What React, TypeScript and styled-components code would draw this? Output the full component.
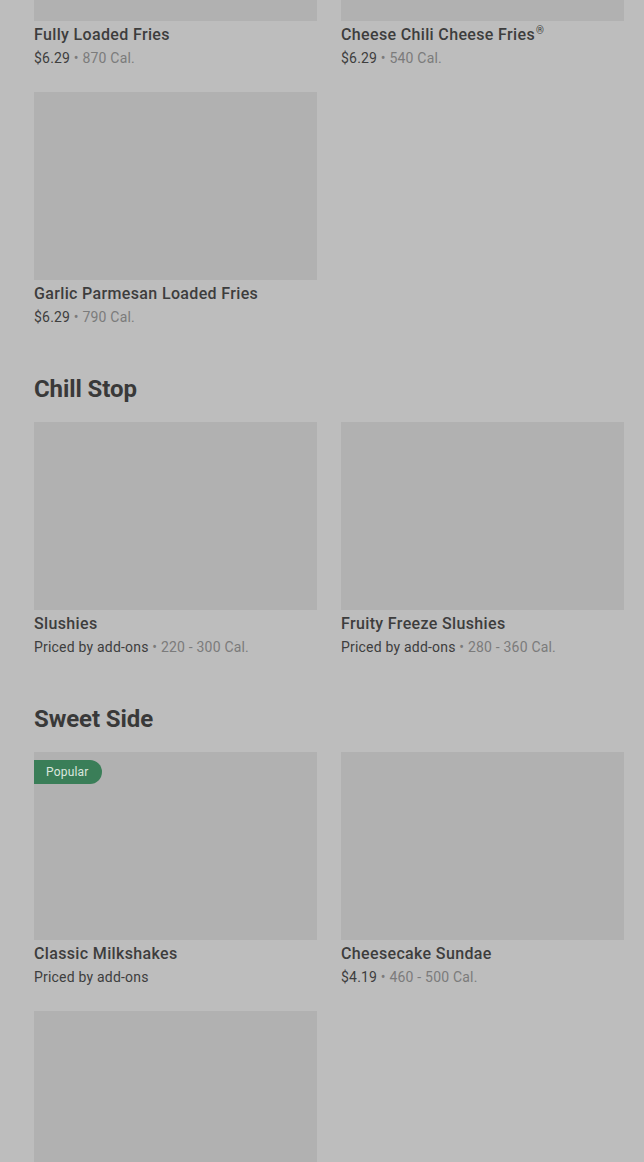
import styled, { createGlobalStyle } from "styled-components";

interface Item {
  name?: string;
  mark?: string;
  price?: string;
  cal?: string;
  popular?: boolean;
}

interface Section {
  title?: string;
  items: Item[];
}

const sections: Section[] = [
  {
    items: [
      { name: "Fully Loaded Fries", price: "$6.29", cal: "870 Cal." },
      { name: "Cheese Chili Cheese Fries", mark: "®", price: "$6.29", cal: "540 Cal." },
      { name: "Garlic Parmesan Loaded Fries", price: "$6.29", cal: "790 Cal." },
    ],
  },
  {
    title: "Chill Stop",
    items: [
      { name: "Slushies", price: "Priced by add-ons", cal: "220 - 300 Cal." },
      { name: "Fruity Freeze Slushies", price: "Priced by add-ons", cal: "280 - 360 Cal." },
    ],
  },
  {
    title: "Sweet Side",
    items: [
      { name: "Classic Milkshakes", price: "Priced by add-ons", popular: true },
      { name: "Cheesecake Sundae", price: "$4.19", cal: "460 - 500 Cal." },
      {},
    ],
  },
];

const App = () => {
  return (
    <>
      <GlobalStyle />
      <Viewport>
        <Page>
          {sections.map((section, i) => (
            <SectionWrap key={i}>
              {section.title && <Heading>{section.title}</Heading>}
              <Grid>
                {section.items.map((item, j) => (
                  <Card key={j}>
                    <Thumb>{item.popular && <Badge>Popular</Badge>}</Thumb>
                    {item.name && (
                      <Name>
                        {item.name}
                        {item.mark && <Mark>{item.mark}</Mark>}
                      </Name>
                    )}
                    {item.price && (
                      <Meta>
                        {item.price}
                        {item.cal && <Cal> • {item.cal}</Cal>}
                      </Meta>
                    )}
                  </Card>
                ))}
              </Grid>
            </SectionWrap>
          ))}
        </Page>
      </Viewport>
    </>
  );
};

export default App;

const GlobalStyle = createGlobalStyle`
  html, body {
    margin: 0;
    padding: 0;
    background: #bdbdbd;
    font-family: Roboto, "Liberation Sans", sans-serif;
  }
`;

const Viewport = styled.div`
  height: 100vh;
  overflow: hidden;
`;

const Page = styled.div`
  margin-top: -167px;
  padding: 0 20px 0 34px;
  display: flex;
  flex-direction: column;
  gap: 46px;
`;

const SectionWrap = styled.section`
  display: flex;
  flex-direction: column;
  gap: 17px;
`;

const Heading = styled.h2`
  margin: 0;
  font-size: 24px;
  line-height: 32px;
  font-weight: 700;
  color: #393939;
  letter-spacing: -0.1px;
`;

const Grid = styled.div`
  display: grid;
  grid-template-columns: 283px 283px;
  column-gap: 24px;
  row-gap: 24px;
`;

const Card = styled.div`
  display: flex;
  flex-direction: column;
`;

const Thumb = styled.div`
  position: relative;
  height: 188px;
  background: #b1b1b1;
`;

const Badge = styled.span`
  position: absolute;
  top: 8px;
  left: 0;
  height: 24px;
  padding: 0 13px 0 12px;
  display: flex;
  align-items: center;
  background: #3a7e58;
  color: #dbe6df;
  font-size: 12px;
  letter-spacing: 0.2px;
  border-radius: 0 12px 12px 0;
`;

const Name = styled.div`
  margin-top: 4px;
  font-size: 16px;
  line-height: 20px;
  font-weight: 500;
  color: #3d3d3d;
  letter-spacing: 0.35px;
`;

const Mark = styled.sup`
  font-size: 10px;
  line-height: 0;
  margin-left: 1px;
`;

const Meta = styled.div`
  margin-top: 3px;
  font-size: 14px;
  line-height: 20px;
  color: #3e3e3e;
  letter-spacing: 0.2px;
`;

const Cal = styled.span`
  color: #7b7b7b;
`;
